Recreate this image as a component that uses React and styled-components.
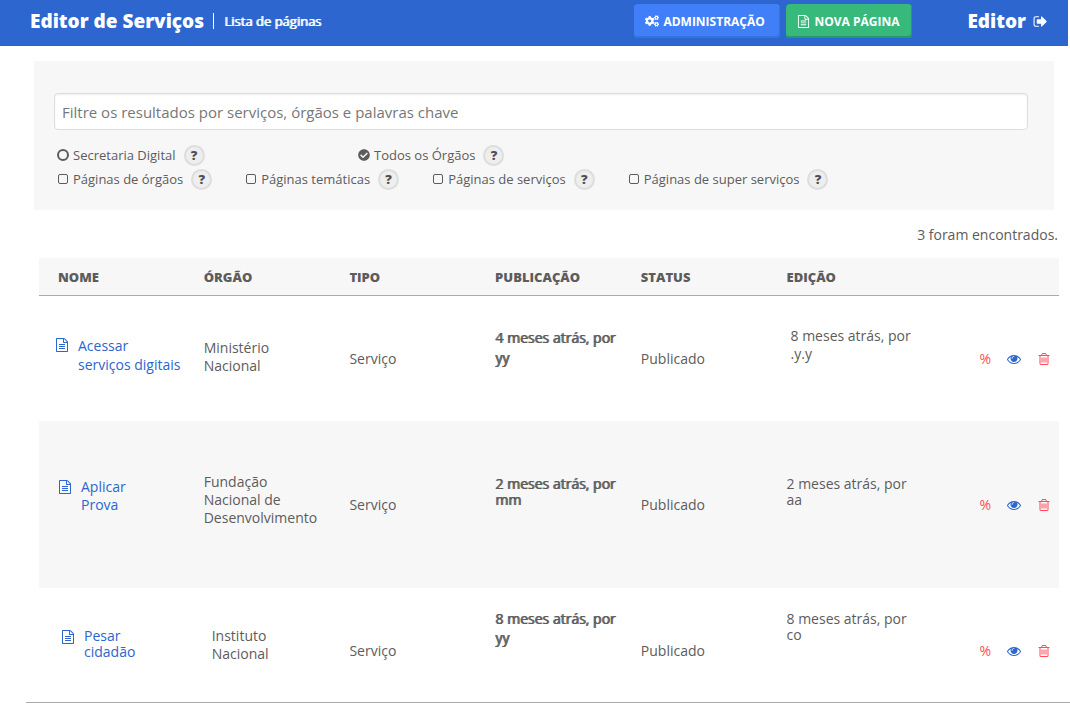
import React, { useState } from "react";
import styled, { createGlobalStyle } from "styled-components";
import { FaCogs, FaCheckCircle } from "react-icons/fa";

const GlobalStyle = createGlobalStyle`
  * { box-sizing: border-box; }
  body {
    margin: 0;
    background: #fff;
    color: #5c5c5c;
    font-family: "Open Sans", "Noto Sans", sans-serif;
    font-size: 14px;
    line-height: 18px;
  }
  button, input { font-family: inherit; color: inherit; }
`;

const Glyph = styled.svg`
  width: ${(p) => p.$size}px;
  height: ${(p) => p.$size}px;
  fill: currentColor;
  display: block;
  flex: none;
`;

const paths = {
  file: "M1596 380q28 28 48 76t20 88v1152q0 40-28 68t-68 28h-1344q-40 0-68-28t-28-68v-1600q0-40 28-68t68-28h896q40 0 88 20t76 48zm-444-244v376h376q-10-29-22-41l-313-313q-12-12-41-22zm384 1528v-1024h-416q-40 0-68-28t-28-68v-416h-768v1536h1280zm-1024-864q0-14 9-23t23-9h704q14 0 23 9t9 23v64q0 14-9 23t-23 9h-704q-14 0-23-9t-9-23v-64zm736 224q14 0 23 9t9 23v64q0 14-9 23t-23 9h-704q-14 0-23-9t-9-23v-64q0-14 9-23t23-9h704zm0 256q14 0 23 9t9 23v64q0 14-9 23t-23 9h-704q-14 0-23-9t-9-23v-64q0-14 9-23t23-9h704z",
  trash: "M704 736v576q0 14-9 23t-23 9h-64q-14 0-23-9t-9-23v-576q0-14 9-23t23-9h64q14 0 23 9t9 23zm256 0v576q0 14-9 23t-23 9h-64q-14 0-23-9t-9-23v-576q0-14 9-23t23-9h64q14 0 23 9t9 23zm256 0v576q0 14-9 23t-23 9h-64q-14 0-23-9t-9-23v-576q0-14 9-23t23-9h64q14 0 23 9t9 23zm128 724v-948h-896v948q0 22 7 40.5t14.5 27 10.5 8.5h832q3 0 10.5-8.5t14.5-27 7-40.5zm-672-1076h448l-48-117q-7-9-17-11h-317q-10 2-17 11zm928 32v64q0 14-9 23t-23 9h-96v948q0 83-47 143.5t-113 60.5h-832q-66 0-113-58.5t-47-141.5v-952h-96q-14 0-23-9t-9-23v-64q0-14 9-23t23-9h309l70-167q15-37 54-63t79-26h320q40 0 79 26t54 63l70 167h309q14 0 23 9t9 23z",
  eye: "M1664 960q-152-236-381-353 61 104 61 225 0 185-131.5 316.5t-316.5 131.5-316.5-131.5-131.5-316.5q0-121 61-225-229 117-381 353 133 205 333.5 326.5t434.5 121.5 434.5-121.5 333.5-326.5zm-720-384q0-20-14-34t-34-14q-125 0-214.5 89.5t-89.5 214.5q0 20 14 34t34 14 34-14 14-34q0-86 61-147t147-61q20 0 34-14t14-34zm848 384q0 34-20 69-140 230-376.5 368.5t-499.5 138.5-499.5-139-376.5-368q-20-35-20-69t20-69q140-229 376.5-368t499.5-139 499.5 139 376.5 368q20 35 20 69z",
  signOut: "M704 1440q0 4 1 20t.5 26.5-3 23.5-10 19.5-20.5 6.5h-320q-119 0-203.5-84.5t-84.5-203.5v-704q0-119 84.5-203.5t203.5-84.5h320q13 0 22.5 9.5t9.5 22.5q0 4 1 20t.5 26.5-3 23.5-10 19.5-20.5 6.5h-320q-66 0-113 47t-47 113v704q0 66 47 113t113 47h312l11.5 1 11.5 3 8 5.5 7 9 2 13.5zm928-544q0 26-19 45l-544 544q-19 19-45 19t-45-19-19-45v-288h-448q-26 0-45-19t-19-45v-384q0-26 19-45t45-19h448v-288q0-26 19-45t45-19 45 19l544 544q19 19 19 45z",
};

const Icon = ({ name, size }) => (
  <Glyph $size={size} viewBox="0 0 1792 1792" aria-hidden="true">
    <path d={paths[name]} />
  </Glyph>
);

const Header = styled.header`
  display: flex;
  align-items: center;
  height: 46px;
  margin-right: 2px;
  padding: 0 20px 4px 30px;
  background: #2c66ce;
  color: #fff;
`;

const Brand = styled.h1`
  margin: 0;
  font-size: 19px;
  line-height: 24px;
  font-weight: 800;
`;

const Section = styled.span`
  margin-left: 9px;
  padding-left: 10px;
  border-left: 1px solid #fff;
  font-size: 13px;
  line-height: 16px;
  text-shadow: 1px 0 0 currentColor;
`;

const HeaderActions = styled.div`
  display: flex;
  gap: 6px;
  margin-left: auto;
`;

const HeaderButton = styled.button`
  display: flex;
  align-items: center;
  gap: 4px;
  width: ${(p) => p.$width}px;
  height: 34px;
  padding: 0 0 0 11px;
  border: 0;
  border-radius: 4px;
  background: ${(p) => (p.$tone === "green" ? "#37b97b" : "#407ff7")};
  box-shadow: inset -1px -2px 0 ${(p) => (p.$tone === "green" ? "#229b6c" : "#3672e2")};
  color: #fff;
  font-size: 12px;
  font-weight: 700;
  text-transform: uppercase;
  cursor: pointer;
`;

const UserLink = styled.a`
  display: flex;
  align-items: center;
  gap: 7px;
  margin-left: 55px;
  color: #fff;
  text-decoration: none;
  font-size: 19px;
  line-height: 24px;
  font-weight: 800;
`;

const FilterPanel = styled.form`
  margin: 15px 16px 0 34px;
  padding: 32px 26px 20px 20px;
  background: #f7f7f7;
`;

const SearchInput = styled.input`
  display: block;
  width: 100%;
  height: 37px;
  padding: 0 7px;
  border: 1px solid #ddd;
  border-radius: 4px;
  background: #fff;
  box-shadow: inset 0 1px 2px #eee;
  font-size: 15px;
  &::placeholder { color: #777; opacity: 1; }
`;

const FilterRow = styled.div`
  display: flex;
  gap: 33px;
  padding-left: 3px;
  margin-top: ${(p) => (p.$first ? 14 : 2)}px;
`;

const FilterItem = styled.div`
  display: flex;
  align-items: center;
  gap: 8px;
  height: 22px;
  ${(p) => p.$wide && "width: 268px;"}
`;

const FilterLabel = styled.label`
  display: flex;
  align-items: center;
  gap: 4px;
  font-size: 13px;
`;

const Mark = styled.span`
  display: grid;
  width: 12px;
  height: 12px;
  place-items: center;
  & > * { grid-area: 1 / 1; }
  svg { display: none; pointer-events: none; }
  input:checked + svg { display: block; }
`;

const Choice = styled.input`
  appearance: none;
  margin: 0;
  width: ${(p) => (p.type === "radio" ? 12 : 10)}px;
  height: ${(p) => (p.type === "radio" ? 12 : 10)}px;
  border: ${(p) => (p.type === "radio" ? 2 : 1)}px solid #5c5c5c;
  border-radius: ${(p) => (p.type === "radio" ? "50%" : "2px")};
  background: transparent;
  &:checked { border-color: ${(p) => (p.type === "radio" ? "transparent" : "#5c5c5c")}; }
`;

const Help = styled.button`
  width: 21px;
  height: 21px;
  padding: 0;
  border: 2px solid #ddd;
  border-radius: 50%;
  background: #eee;
  color: #505050;
  font-size: 13px;
  line-height: 16px;
  font-weight: 800;
  cursor: pointer;
`;

const ResultCount = styled.p`
  margin: 16px 12px 14px;
  text-align: right;
`;

const TableFrame = styled.div`
  margin-left: 26px;
  padding: 0 11px 0 13px;
  border-bottom: 1px solid #aaa;
`;

const Table = styled.table`
  width: 100%;
  table-layout: fixed;
  border-collapse: separate;
  border-spacing: 0;
`;

const HeadCell = styled.th`
  height: 38px;
  padding: 0 0 0 19px;
  border-bottom: 1px solid #aaa;
  background: #f7f7f7;
  text-align: left;
  font-size: 13px;
  font-weight: 800;
  text-transform: uppercase;
`;

const Row = styled.tr`
  height: ${(p) => p.$height}px;
  background: ${(p) => (p.$shaded ? "#f7f7f7" : "#fff")};
`;

const Cell = styled.td`
  padding: ${(p) => (p.$last ? 12 : 0)}px 0 0 19px;
  vertical-align: middle;
`;

const NameCell = styled(Cell)`
  padding-left: 16px;
`;

const Lines = styled.div`
  min-height: ${(p) => p.$block}px;
  padding-left: ${(p) => p.$inset || 0}px;
  line-height: ${(p) => p.$leading}px;
  text-shadow: ${(p) => (p.$strong ? "1px 0 0 currentColor" : "none")};
  white-space: pre-line;
`;

const PageLink = styled.a`
  display: flex;
  gap: 9px;
  color: #2c66ce;
  text-decoration: none;
  white-space: pre;
  svg { margin-top: 2px; }
`;

const RowActions = styled.div`
  display: flex;
  align-items: center;
  justify-content: flex-end;
  gap: 16px;
  padding-right: 8px;
`;

const IconButton = styled.button`
  display: block;
  padding: 0;
  border: 0;
  background: none;
  color: ${(p) => (p.$tone === "blue" ? "#2c66ce" : "#ff4b5a")};
  font-size: 14px;
  line-height: 18px;
  cursor: pointer;
`;

const columns = ["Nome", "Órgão", "Tipo", "Publicação", "Status", "Edição"];

const pages = [
  {
    height: 125,
    name: { text: "Acessar\nserviços digitais", leading: 19, block: 46, inset: 0 },
    agency: { text: "Ministério\nNacional", leading: 18, block: 40 },
    published: { text: "4 meses atrás, por\nyy", leading: 20, block: 62 },
    edited: { text: "8 meses atrás, por\n.y.y", leading: 18, block: 64, inset: 4 },
  },
  {
    height: 167,
    name: { text: "Aplicar\nProva", leading: 18, block: 54, inset: 3 },
    agency: { text: "Fundação\nNacional de\nDesenvolvimento", leading: 18, block: 64 },
    published: { text: "2 meses atrás, por\nmm", leading: 16, block: 58 },
    edited: { text: "2 meses atrás, por\naa", leading: 16, block: 58 },
  },
  {
    height: 114,
    name: { text: "Pesar\ncidadão", leading: 16, block: 46, inset: 6 },
    agency: { text: "Instituto\nNacional", leading: 18, block: 48, inset: 8 },
    published: { text: "8 meses atrás, por\nyy", leading: 19, block: 84 },
    edited: { text: "8 meses atrás, por\nco", leading: 16, block: 80 },
  },
];

const TextBlock = ({ data, strong, children }) => (
  <Lines $leading={data.leading} $block={data.block} $inset={data.inset} $strong={strong}>
    {children || data.text}
  </Lines>
);

const Filter = ({ id, type, label, wide, ...input }) => (
  <FilterItem $wide={wide}>
    <FilterLabel htmlFor={id}>
      <Mark>
        <Choice id={id} type={type} {...input} />
        {type === "radio" && <FaCheckCircle size={12} />}
      </Mark>
      {label}
    </FilterLabel>
    <Help type="button" aria-label={`Ajuda: ${label}`}>?</Help>
  </FilterItem>
);

export default function App() {
  const [scope, setScope] = useState("todos");
  return (
    <>
      <GlobalStyle />
      <Header>
        <Brand>Editor de Serviços</Brand>
        <Section>Lista de páginas</Section>
        <HeaderActions>
          <HeaderButton $width={146}><FaCogs size={14} />Administração</HeaderButton>
          <HeaderButton $width={126} $tone="green"><Icon name="file" size={13} />Nova página</HeaderButton>
        </HeaderActions>
        <UserLink href="#sair">Editor<Icon name="signOut" size={15} /></UserLink>
      </Header>
      <main>
        <FilterPanel>
          <SearchInput
            type="text"
            aria-label="Filtrar resultados"
            placeholder="Filtre os resultados por serviços, órgãos e palavras chave"
          />
          <FilterRow $first>
            <Filter wide id="secretaria" type="radio" name="scope" label="Secretaria Digital"
              checked={scope === "secretaria"} onChange={() => setScope("secretaria")} />
            <Filter id="todos" type="radio" name="scope" label="Todos os Órgãos"
              checked={scope === "todos"} onChange={() => setScope("todos")} />
          </FilterRow>
          <FilterRow>
            <Filter id="orgaos" type="checkbox" label="Páginas de órgãos" />
            <Filter id="tematicas" type="checkbox" label="Páginas temáticas" />
            <Filter id="servicos" type="checkbox" label="Páginas de serviços" />
            <Filter id="super" type="checkbox" label="Páginas de super serviços" />
          </FilterRow>
        </FilterPanel>
        <ResultCount>3 foram encontrados.</ResultCount>
        <TableFrame>
          <Table>
            <thead>
              <tr>
                {columns.map((c) => <HeadCell key={c} scope="col">{c}</HeadCell>)}
                <HeadCell as="td" />
              </tr>
            </thead>
            <tbody>
              {pages.map((page, i) => {
                const last = i === pages.length - 1;
                return (
                  <Row key={page.name.text} $height={page.height} $shaded={i % 2 === 1}>
                    <NameCell $last={last}>
                      <TextBlock data={page.name}>
                        <PageLink href="#pagina">
                          <Icon name="file" size={14} />
                          <span>{page.name.text}</span>
                        </PageLink>
                      </TextBlock>
                    </NameCell>
                    <Cell $last={last}><TextBlock data={page.agency} /></Cell>
                    <Cell $last={last}>Serviço</Cell>
                    <Cell $last={last}><TextBlock strong data={page.published} /></Cell>
                    <Cell $last={last}>Publicado</Cell>
                    <Cell $last={last}><TextBlock data={page.edited} /></Cell>
                    <Cell $last={last}>
                      <RowActions>
                        <IconButton aria-label="Desvincular">%</IconButton>
                        <IconButton $tone="blue" aria-label="Visualizar"><Icon name="eye" size={14} /></IconButton>
                        <IconButton aria-label="Excluir"><Icon name="trash" size={14} /></IconButton>
                      </RowActions>
                    </Cell>
                  </Row>
                );
              })}
            </tbody>
          </Table>
        </TableFrame>
      </main>
    </>
  );
}
